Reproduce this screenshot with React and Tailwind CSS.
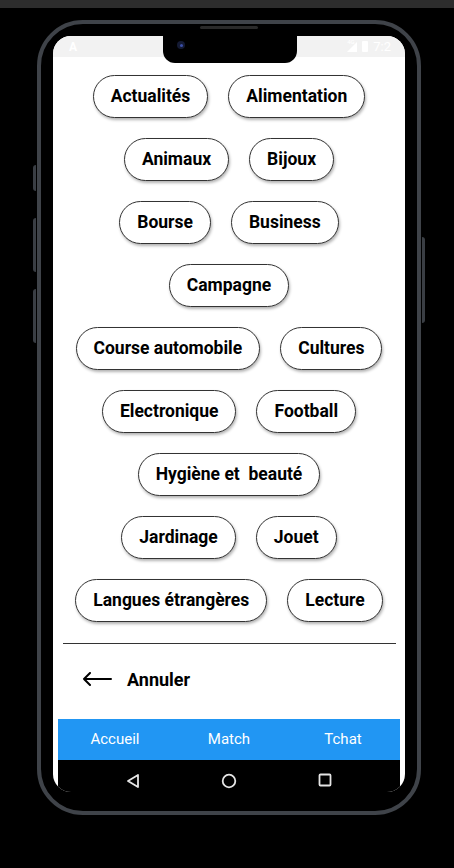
import React from "react";

const rows = [
  ["Actualités", "Alimentation"],
  ["Animaux", "Bijoux"],
  ["Bourse", "Business"],
  ["Campagne"],
  ["Course automobile", "Cultures"],
  ["Electronique", "Football"],
  ["Hygiène et  beauté"],
  ["Jardinage", "Jouet"],
  ["Langues étrangères", "Lecture"],
];

function Chip({ label }) {
  return (
    <div className="mx-[10px] h-[43px] px-[17px] flex items-center rounded-full border border-[#333] bg-white shadow-[1px_2px_3px_rgba(0,0,0,0.3)] text-[17.5px] font-bold text-black whitespace-pre">
      {label}
    </div>
  );
}

export default function App() {
  return (
    <div className="min-h-[868px] bg-black font-['Roboto',sans-serif] overflow-hidden">
      <div className="h-2 bg-[#2d2d2d]" />

      <div className="relative ml-[37px] mt-3 w-[384px] h-[795px] rounded-[46px] border-4 border-[#3f4349] bg-black p-3">
        {/* side buttons */}
        <div className="absolute -left-[8px] top-[141px] w-[3px] h-[26px] rounded-l bg-[#3a3e44]" />
        <div className="absolute -left-[8px] top-[194px] w-[3px] h-[54px] rounded-l bg-[#3a3e44]" />
        <div className="absolute -left-[8px] top-[265px] w-[3px] h-[54px] rounded-l bg-[#3a3e44]" />
        <div className="absolute -right-[8px] top-[213px] w-[3px] h-[86px] rounded-r bg-[#3a3e44]" />
        {/* speaker */}
        <div className="absolute left-[159px] top-[2px] w-[58px] h-[3px] rounded-full bg-[#2a2a2a]" />

        <div className="relative h-[756px] rounded-[18px] overflow-hidden bg-white flex flex-col">
          {/* notch */}
          <div className="absolute left-[110px] top-0 w-[134px] h-[27px] rounded-b-[12px] bg-black">
            <div className="absolute left-[14px] top-[5px] w-[8px] h-[8px] rounded-full bg-[#141a33] flex items-center justify-center">
              <div className="w-[3px] h-[3px] rounded-full bg-[#3b4fa8]" />
            </div>
          </div>

          {/* status bar */}
          <div className="h-[21px] bg-[#f2f2f2] flex items-center justify-between pl-[16px] pr-[14px] text-white">
            <span className="text-[12px] font-bold leading-none">A</span>
            <div className="flex items-center gap-[5px]">
              <div className="relative w-[10px] h-[10px]">
                <span className="absolute -top-[3px] left-0 text-[6px] leading-none">4G</span>
                <svg width="10" height="10" viewBox="0 0 10 10" className="absolute top-0 left-0">
                  <path d="M10 0 L10 10 L0 10 Z" fill="white" />
                </svg>
              </div>
              <div className="w-[6px] h-[11px] rounded-[1px] bg-white" />
              <span className="text-[13px] leading-none">7:2</span>
            </div>
          </div>

          {/* chips */}
          <div className="flex-1 flex flex-col pt-[8px]">
            {rows.map((row, i) => (
              <div key={i} className="flex justify-center my-[10px]">
                {row.map(label => (
                  <Chip key={label} label={label} />
                ))}
              </div>
            ))}

            <div className="mt-[11px] ml-[10px] mr-[9px] h-px bg-[#333]" />

            <div className="flex items-center h-[70px] pl-[29px] gap-[15px]">
              <svg width="30" height="14" viewBox="0 0 30 14" fill="none">
                <path d="M29 7 H2 M8 1 L2 7 L8 13" stroke="black" strokeWidth="2" strokeLinecap="round" strokeLinejoin="round" />
              </svg>
              <span className="text-[18px] font-bold text-black">Annuler</span>
            </div>
          </div>

          {/* bottom tabs */}
          <div className="mx-[5px] h-[41px] bg-[#2196f3] grid grid-cols-3 items-center text-center text-[15px] text-white">
            <span>Accueil</span>
            <span>Match</span>
            <span>Tchat</span>
          </div>

          {/* nav bar */}
          <div className="mx-[5px] h-[32px] bg-black flex items-start justify-center gap-[81px] pt-[13px]">
            <svg width="14" height="16" viewBox="0 0 14 16" fill="none">
              <path d="M12 2 L2 8 L12 14 Z" stroke="#e5e5e5" strokeWidth="1.8" strokeLinejoin="round" />
            </svg>
            <svg width="16" height="16" viewBox="0 0 16 16" fill="none">
              <circle cx="8" cy="8" r="6.3" stroke="#e5e5e5" strokeWidth="1.8" />
            </svg>
            <svg width="14" height="14" viewBox="0 0 14 14" fill="none">
              <rect x="1.5" y="1.5" width="11" height="11" rx="1" stroke="#e5e5e5" strokeWidth="1.8" />
            </svg>
          </div>
        </div>
      </div>
    </div>
  );
}
